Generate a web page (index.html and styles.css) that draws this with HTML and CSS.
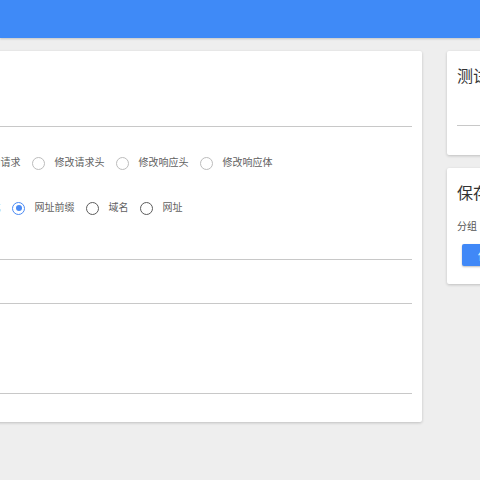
FILE: index.html
```html
<!DOCTYPE html>
<html lang="zh-CN">
<head>
<meta charset="utf-8">
<title>编辑规则</title>
<link rel="stylesheet" href="styles.css">
</head>
<body>
<header class="topbar"></header>
<div class="layout">
  <main class="card main-card">
    <div class="field name-field"></div>
    <div class="radio-row row-type">
      <label class="opt"><span class="radio radio-light"></span><span class="opt-text">取消请求</span></label>
      <label class="opt"><span class="radio radio-light"></span><span class="opt-text">重定向请求</span></label>
      <label class="opt"><span class="radio radio-light"></span><span class="opt-text">修改请求头</span></label>
      <label class="opt"><span class="radio radio-light"></span><span class="opt-text">修改响应头</span></label>
      <label class="opt"><span class="radio radio-light"></span><span class="opt-text">修改响应体</span></label>
    </div>
    <div class="radio-row row-match">
      <label class="opt"><span class="radio"></span><span class="opt-text">全部</span></label>
      <label class="opt"><span class="radio"></span><span class="opt-text">正则表达式</span></label>
      <label class="opt"><span class="radio radio-on"></span><span class="opt-text">网址前缀</span></label>
      <label class="opt"><span class="radio"></span><span class="opt-text">域名</span></label>
      <label class="opt"><span class="radio"></span><span class="opt-text">网址</span></label>
    </div>
    <div class="field rule-field"></div>
    <div class="field exclude-field"></div>
    <div class="field code-field"></div>
  </main>
  <aside class="side">
    <section class="card side-card test-card">
      <h2 class="side-title">测试网址</h2>
      <div class="field test-field"></div>
    </section>
    <section class="card side-card save-card">
      <h2 class="side-title">保存</h2>
      <div class="group-row"><span>分组</span><span>未分组</span></div>
      <button class="save-btn">保存</button>
    </section>
  </aside>
</div>
</body>
</html>
```

FILE: styles.css
```css
html, body {
  margin: 0;
  padding: 0;
}
body {
  background: #eeeeee;
  font-family: Roboto, "Noto Sans CJK SC", sans-serif;
  color: #616161;
  overflow: hidden;
  width: 480px;
  height: 480px;
}
.topbar {
  height: 38px;
  background: #3f8af7;
  box-shadow: 0 1px 2px rgba(0, 0, 0, 0.18);
}
.layout {
  display: flex;
  align-items: flex-start;
  gap: 25px;
  padding-top: 13px;
  margin-left: -136px;
  width: 900px;
}
.card {
  background: #ffffff;
  box-shadow: 0 1px 3px rgba(0, 0, 0, 0.2);
  border-radius: 2px;
}
.main-card {
  width: 538px;
  padding: 0 10px 28px 10px;
  flex: none;
}
.field {
  border-bottom: 1px solid #c8c8c8;
}
.name-field {
  height: 75px;
}
.radio-row {
  display: flex;
  align-items: center;
  height: 20px;
  font-size: 10px;
}
.row-type {
  margin-top: 26px;
}
.row-match {
  margin-top: 25px;
}
.opt {
  display: flex;
  align-items: center;
  margin-right: 11.5px;
  line-height: 20px;
}
.radio {
  width: 13px;
  height: 13px;
  box-sizing: border-box;
  border-radius: 50%;
  border: 1.5px solid #5c5c5c;
  margin-right: 9.5px;
  flex: none;
  display: flex;
  align-items: center;
  justify-content: center;
}
.radio-light {
  border-color: #bcbcbc;
}
.radio-on {
  border-color: #4a8af4;
}
.radio-on::after {
  content: "";
  width: 6px;
  height: 6px;
  border-radius: 50%;
  background: #4a8af4;
}
.opt-text {
  white-space: nowrap;
}
.rule-field {
  height: 41px;
}
.exclude-field {
  height: 43px;
}
.code-field {
  height: 89px;
}
.side {
  display: flex;
  flex-direction: column;
  gap: 13px;
  width: 260px;
  flex: none;
}
.side-card {
  padding: 14px 10px 0 10px;
}
.side-title {
  margin: 0;
  font-size: 16px;
  line-height: 24px;
  font-weight: 400;
  color: #333333;
  white-space: nowrap;
}
.test-card {
  height: 90px;
}
.test-field {
  height: 36px;
}
.save-card {
  height: 102px;
}
.group-row {
  margin-top: 13px;
  display: flex;
  gap: 11px;
  font-size: 10px;
  line-height: 16px;
  color: #555555;
}
.save-btn {
  display: block;
  margin: 9px 0 0 5px;
  height: 22px;
  padding: 0 16px;
  border: none;
  border-radius: 2px;
  background: #4088f7;
  color: #ffffff;
  font-family: Roboto, "Noto Sans CJK SC", sans-serif;
  font-size: 11px;
  box-shadow: 0 1px 2px rgba(0, 0, 0, 0.25);
}
```
